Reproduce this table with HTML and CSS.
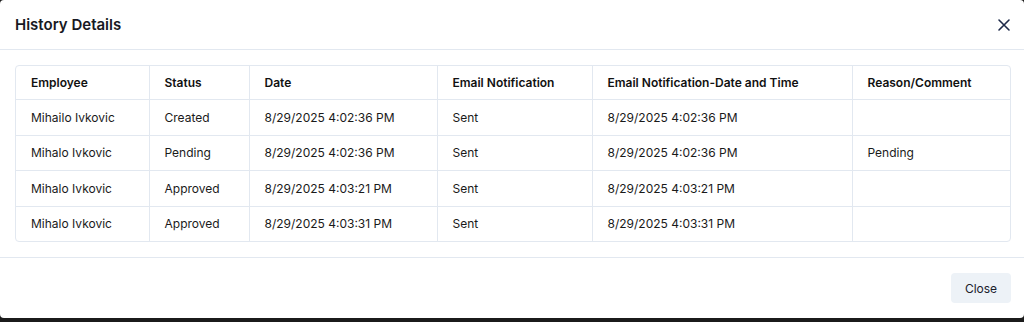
FILE: index.html
```html
<!DOCTYPE html>
<html lang="en">
<head>
<meta charset="utf-8">
<title>History Details</title>
<link rel="stylesheet" href="styles.css">
</head>
<body>
<div class="modal">
  <div class="modal-header">
    <h2 class="modal-title">History Details</h2>
    <button class="icon-close" aria-label="Close">
      <svg width="14" height="14" viewBox="0 0 14 14"><path d="M2 2L12 12M12 2L2 12" stroke="currentColor" stroke-width="1.6" stroke-linecap="round"/></svg>
    </button>
  </div>
  <div class="modal-body">
    <div class="table-wrap">
      <table class="history">
        <colgroup>
          <col class="c1"><col class="c2"><col class="c3"><col class="c4"><col class="c5"><col class="c6">
        </colgroup>
        <thead>
          <tr><th>Employee</th><th>Status</th><th>Date</th><th>Email Notification</th><th>Email Notification-Date and Time</th><th>Reason/Comment</th></tr>
        </thead>
        <tbody>
          <tr><td>Mihailo Ivkovic</td><td>Created</td><td>8/29/2025 4:02:36 PM</td><td>Sent</td><td>8/29/2025 4:02:36 PM</td><td></td></tr>
          <tr><td>Mihalo Ivkovic</td><td>Pending</td><td>8/29/2025 4:02:36 PM</td><td>Sent</td><td>8/29/2025 4:02:36 PM</td><td>Pending</td></tr>
          <tr><td>Mihalo Ivkovic</td><td>Approved</td><td>8/29/2025 4:03:21 PM</td><td>Sent</td><td>8/29/2025 4:03:21 PM</td><td></td></tr>
          <tr><td>Mihalo Ivkovic</td><td>Approved</td><td>8/29/2025 4:03:31 PM</td><td>Sent</td><td>8/29/2025 4:03:31 PM</td><td></td></tr>
        </tbody>
      </table>
    </div>
  </div>
  <div class="modal-footer">
    <button class="btn">Close</button>
  </div>
</div>
</body>
</html>
```
FILE: styles.css
```css
html, body {
  margin: 0;
  padding: 0;
}
body {
  background: #1b1b1b;
  font-family: Inter, "Noto Sans", sans-serif;
  color: #1a202c;
  height: 322px;
}
.modal {
  width: 1024px;
  height: 318px;
  background: #fff;
  border-radius: 4px;
  display: flex;
  flex-direction: column;
  box-sizing: border-box;
}
.modal-header {
  height: 49px;
  border-bottom: 1px solid #e2e8f0;
  display: flex;
  align-items: center;
  justify-content: space-between;
  padding: 0 13px 0 15px;
}
.modal-title {
  margin: 0;
  font-size: 15px;
  font-weight: 600;
  color: #171923;
}
.icon-close {
  border: 0;
  background: none;
  padding: 0;
  width: 14px;
  height: 14px;
  color: #1e2a4a;
  display: flex;
}
.modal-body {
  padding: 15px 13px 15px 15px;
  border-bottom: 1px solid #e2e8f0;
}
.table-wrap {
  border: 1px solid #e2e8f0;
  border-radius: 4px;
  overflow: hidden;
}
.history {
  width: 100%;
  border-collapse: collapse;
  table-layout: fixed;
  font-size: 12px;
}
.c1 { width: 133px; }
.c2 { width: 100px; }
.c3 { width: 188px; }
.c4 { width: 155px; }
.c5 { width: 260px; }
.c6 { width: auto; }
.history th,
.history td {
  text-align: left;
  padding: 0 15px;
  border-right: 1px solid #e2e8f0;
  border-bottom: 1px solid #e2e8f0;
  white-space: nowrap;
}
.history th:last-child,
.history td:last-child { border-right: 0; }
.history tbody tr:last-child td { border-bottom: 0; }
.history th {
  height: 33px;
  font-weight: 600;
  color: #111;
}
.history td {
  height: 34.5px;
  font-weight: 400;
  color: #1a1a1a;
}
.modal-footer {
  flex: 1;
  display: flex;
  justify-content: flex-end;
  align-items: flex-start;
  padding: 15px 13px 0 0;
}
.btn {
  width: 60px;
  height: 30px;
  border: 0;
  border-radius: 4px;
  background: #edf2f7;
  font-family: inherit;
  font-size: 12px;
  color: #1a202c;
}
```
